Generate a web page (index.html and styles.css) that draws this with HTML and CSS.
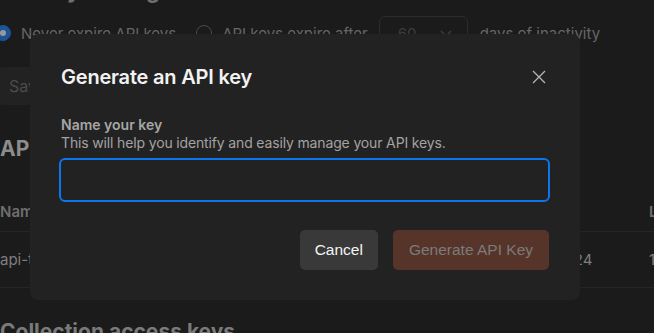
FILE: index.html
```html
<!DOCTYPE html>
<html lang="en">
<head>
<meta charset="utf-8">
<title>Generate an API key</title>
<link rel="stylesheet" href="styles.css">
</head>
<body>
<div class="page">
  <h2 class="top-heading">API key settings</h2>
  <div class="radio-row">
    <span class="radio radio-on"></span>
    <span class="radio-label label-1">Never expire API keys</span>
    <span class="radio"></span>
    <span class="radio-label label-2">API keys expire after</span>
    <span class="select"><span>60</span>
      <svg width="14" height="14" viewBox="0 0 14 14"><path d="M2 5l5 5 5-5" fill="none" stroke="#3f3f3f" stroke-width="1.3"/></svg>
    </span>
    <span class="radio-label label-3">days of inactivity</span>
  </div>
  <button class="save">Save</button>
  <h2 class="section">API keys</h2>
  <div class="table">
    <div class="row head">
      <span class="c1">Name</span><span class="c2">Created</span><span class="c3">Last used</span>
    </div>
    <div class="row body">
      <span class="c1">api-test-key</span><span class="c2">Jun 10, 2024</span><span class="c3">1 day ago</span>
    </div>
  </div>
  <h2 class="section section-2">Collection access keys</h2>
</div>

<div class="overlay">
  <div class="modal">
    <div class="modal-head">
      <h1 class="modal-title">Generate an API key</h1>
      <button class="close" aria-label="Close">
        <svg width="14" height="14" viewBox="0 0 14 14"><path d="M1 1l12 12M13 1L1 13" stroke="#b5b5b5" stroke-width="1.3" fill="none"/></svg>
      </button>
    </div>
    <label class="field-label" for="keyname">Name your key</label>
    <p class="field-help">This will help you identify and easily manage your API keys.</p>
    <input id="keyname" class="field-input" type="text">
    <div class="actions">
      <button class="btn btn-cancel">Cancel</button>
      <button class="btn btn-primary" disabled>Generate API Key</button>
    </div>
  </div>
</div>
</body>
</html>
```

FILE: styles.css
```css
* { box-sizing: border-box; }
html, body { margin: 0; padding: 0; }
body {
  background: #1b1b1b;
  font-family: Inter, "Noto Sans", sans-serif;
  width: 654px;
  height: 333px;
  overflow: hidden;
}
.page {
  width: 700px;
}
.top-heading {
  margin: -24px 0 0 0;
  font-size: 22px;
  line-height: 28px;
  font-weight: 700;
  color: #6f6f6f;
}
.radio-row {
  margin-top: 12px;
  height: 34px;
  display: flex;
  align-items: center;
  font-size: 15px;
  color: #666666;
}
.radio {
  width: 16px;
  height: 16px;
  border-radius: 50%;
  border: 1px solid #4a4a4a;
  flex: none;
}
.radio-on {
  margin-left: -5px;
  background: #1b5499;
  border-color: #1b5499;
  position: relative;
}
.radio-on::after {
  content: "";
  position: absolute;
  left: 4px; top: 4px;
  width: 6px; height: 6px;
  border-radius: 50%;
  background: #9a9a9a;
}
.radio-label { margin-left: 10px; white-space: nowrap; }
.label-1 { margin-right: 20px; }
.label-2 { margin-right: 11px; }
.label-3 { margin-left: 12px; }
.select {
  width: 89px;
  height: 34px;
  border: 1px solid #2c2c2c;
  border-radius: 6px;
  display: flex;
  align-items: center;
  justify-content: space-between;
  padding: 0 14px 0 18px;
  color: #3d3d3d;
}
.save {
  margin: 17px 0 0 -3px;
  display: block;
  height: 38px;
  padding: 0 12px;
  border: 0;
  border-radius: 6px;
  background: #222222;
  color: #4b4b4b;
  font: 16px Inter, sans-serif;
}
.section {
  margin: 30px 0 0 0;
  font-size: 21px;
  line-height: 28px;
  font-weight: 700;
  color: #8c8c8c;
}
.table { margin-top: 29px; }
.row {
  display: grid;
  grid-template-columns: 501px 148px 1fr;
  align-items: center;
  border-bottom: 1px solid #252525;
  font-size: 15px;
  white-space: nowrap;
}
.row.head { height: 40px; color: #6e6e6e; font-weight: 600; }
.row.body { height: 56px; color: #7f7f7f; }
.section-2 { margin-top: 30px; color: #7a7a7a; }

.overlay {
  position: fixed;
  inset: 0;
}
.modal {
  position: absolute;
  left: 30px;
  top: 34px;
  width: 550px;
  height: 266px;
  background: #222222;
  border-radius: 8px;
  padding: 31px 30px 30px 30px;
  display: flex;
  flex-direction: column;
}
.modal-head {
  display: flex;
  align-items: center;
  justify-content: space-between;
  height: 24px;
}
.modal-title {
  margin: 0 0 0 1px;
  font-size: 20px;
  line-height: 24px;
  font-weight: 600;
  color: #f2f2f2;
  letter-spacing: -0.2px;
}
.close {
  width: 24px;
  height: 24px;
  margin-right: -1px;
  padding: 0;
  border: 0;
  background: transparent;
  display: flex;
  align-items: center;
  justify-content: center;
}
.field-label {
  margin: 27px 0 0 1px;
  font-size: 14px;
  line-height: 18px;
  font-weight: 600;
  color: #a6a6a6;
}
.field-help {
  margin: 0 0 0 1px;
  font-size: 14px;
  line-height: 18px;
  color: #a3a3a3;
  letter-spacing: -0.15px;
}
.field-input {
  margin-top: 6px;
  width: 491px;
  margin-left: -1px;
  height: 44px;
  border: 2px solid #0b76ee;
  border-radius: 6px;
  background: #222222;
  outline: none;
}
.actions {
  margin-top: 28px;
  margin-right: 1px;
  display: flex;
  justify-content: flex-end;
  gap: 15px;
}
.btn {
  height: 40px;
  padding: 0 15px;
  border: 0;
  border-radius: 5px;
  font-family: "Liberation Sans", Arial, sans-serif;
  font-size: 15.5px;
}
.btn-cancel { background: #393939; color: #f4f4f4; }
.btn-primary { background: #57342a; color: #7b7b7b; padding: 0 16px; }
```
